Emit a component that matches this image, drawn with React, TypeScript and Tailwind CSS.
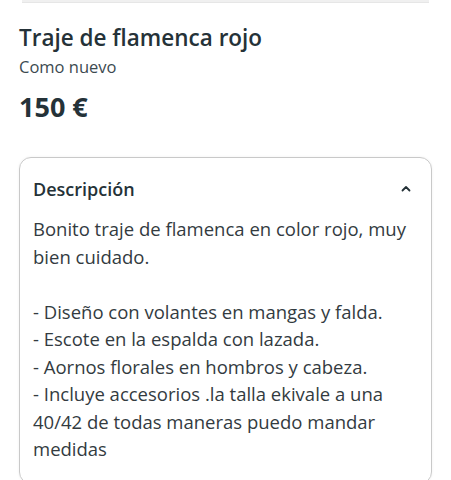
import React from 'react';

const description = [
  'Bonito traje de flamenca en color rojo, muy bien cuidado.',
  '',
  '- Diseño con volantes en mangas y falda.',
  '- Escote en la espalda con lazada.',
  '- Aornos florales en hombros y cabeza.',
  '- Incluye accesorios .la talla ekivale a una 40/42 de todas maneras puedo mandar medidas',
];

const App: React.FC = () => {
  return (
    <div className="w-[451px] h-[480px] overflow-hidden bg-white font-['Open_Sans',sans-serif]">
      {/* bottom edge of previous card */}
      <div className="mx-[22px] h-[3px] bg-[#f0f0f0] border-b border-[#e6e6e6]" />

      <div className="px-[19px] pt-[20px]">
        <h1 className="text-[22.5px] leading-[30px] font-semibold text-[#253238]">Traje de flamenca rojo</h1>
        <p className="mt-[3px] text-[16.5px] leading-[22px] text-[#3c4a50]">Como nuevo</p>
        <p className="mt-[12px] text-[27px] leading-[34px] font-bold text-[#253238]">150 €</p>

        <div className="mt-[33px] rounded-[12px] border-[1.5px] border-[#c9c9c9] shadow-[0_0_3px_rgba(0,0,0,0.06)] px-[13px] pt-[19px] pb-[20px]">
          <div className="flex items-center justify-between">
            <h2 className="text-[18px] leading-[24px] font-semibold text-[#253238]">Descripción</h2>
            <svg width="12" height="12" viewBox="0 0 12 12" className="mr-[6px]">
              <path d="M2.5 7.5 L6 4 L9.5 7.5" fill="none" stroke="#253238" strokeWidth="1.8" strokeLinecap="round" strokeLinejoin="round" />
            </svg>
          </div>
          <div className="mt-[14px] text-[18.5px] leading-[27.5px] text-[#333b3f] pr-[4px]">
            {description.map((line, i) => (
              <p key={i} className="min-h-[27.5px]">{line}</p>
            ))}
          </div>
        </div>
      </div>
    </div>
  );
};

export default App;
